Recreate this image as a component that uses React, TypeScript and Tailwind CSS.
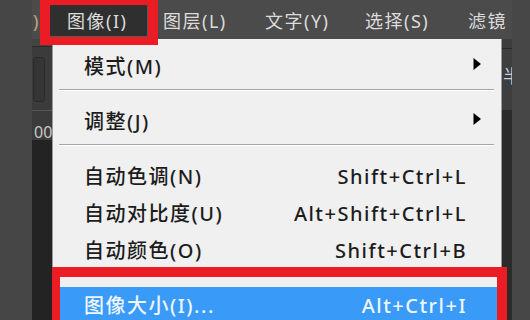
import React from "react";

type Item =
  | { kind: "sep" }
  | { kind: "item"; label: string; shortcut?: string; arrow?: boolean; active?: boolean };

const menuItems: Item[] = [
  { kind: "item", label: "模式(M)", arrow: true },
  { kind: "sep" },
  { kind: "item", label: "调整(J)", arrow: true },
  { kind: "sep" },
  { kind: "item", label: "自动色调(N)", shortcut: "Shift+Ctrl+L" },
  { kind: "item", label: "自动对比度(U)", shortcut: "Alt+Shift+Ctrl+L" },
  { kind: "item", label: "自动颜色(O)", shortcut: "Shift+Ctrl+B" },
  { kind: "sep" },
  { kind: "item", label: "图像大小(I)...", shortcut: "Alt+Ctrl+I", active: true },
];

const topMenus = [
  { label: "图层(L)", w: "w-[102px]" },
  { label: "文字(Y)", w: "w-[100px]" },
  { label: "选择(S)", w: "w-[103px]" },
  { label: "滤镜", w: "w-[103px]" },
];

function Arrow() {
  return (
    <svg width="8" height="12" viewBox="0 0 8 12" className="-translate-y-[3px]">
      <path d="M0.5 0 L8 6 L0.5 12 Z" fill="#000" />
    </svg>
  );
}

function MenuRow({ item }: { item: Extract<Item, { kind: "item" }> }) {
  return (
    <div
      className={
        item.active
          ? "flex h-[37px] items-center mx-[2px] pl-[29px] pr-[18px] bg-[#3a9af7] text-[#eef6ff]"
          : "flex h-[37px] items-center pl-[31px] pr-[20px] text-[#1c1c1c]"
      }
    >
      <span className="tracking-[1.5px]">{item.label}</span>
      {item.shortcut && (
        <span className="ml-auto mr-[14px] tracking-[1.5px]">{item.shortcut}</span>
      )}
      {item.arrow && (
        <span className="ml-auto">
          <Arrow />
        </span>
      )}
    </div>
  );
}

export default function App() {
  return (
    <div className="w-[530px] h-[320px] overflow-hidden flex bg-[#464646] font-['Noto_Sans','Noto_Sans_CJK_SC',sans-serif]">
      <div className="w-[32px] shrink-0 bg-[#464646]" />

      <div className="w-[480px] shrink-0 flex flex-col relative">
        {/* menu bar */}
        <div className="h-[39px] shrink-0 flex pt-[5px] pb-[2px] bg-[#4b4b4b] text-[18px] leading-none text-[#dcdcdc] overflow-hidden whitespace-nowrap">
          <div className="w-[18px] shrink-0 flex items-center pl-[1px] text-[#c9a27a]">)</div>
          <div className="w-[98px] shrink-0 flex items-center pl-[17px] bg-[#2f2f2f] rounded-[2px] border-r border-b border-[#5a5a5a]">
            <span className="tracking-[1.5px]">图像(I)</span>
          </div>
          {topMenus.map((m) => (
            <div key={m.label} className={`${m.w} shrink-0 flex items-center pl-[15px]`}>
              <span className="tracking-[1.5px]">{m.label}</span>
            </div>
          ))}
        </div>

        <div className="flex flex-1 min-h-0">
          {/* left panel */}
          <div className="w-[20px] shrink-0 flex flex-col bg-[#232323] overflow-hidden">
            <div className="h-[7px] bg-[#434343]" />
            <div className="h-px bg-[#2c2c2c]" />
            <div className="h-[63px] bg-[#3b3b3b] pt-[10px] pl-[1px]">
              <div className="w-[12px] h-[45px] rounded-[3px] bg-[#353535] border border-[#2a2a2a]" />
            </div>
            <div className="h-px bg-[#555555]" />
            <div className="h-[29px] bg-[#3b3b3b] flex items-end pl-[2px] text-[16px] leading-none text-[#c8c8c8] whitespace-nowrap">
              00
            </div>
          </div>

          {/* dropdown menu */}
          <div className="w-[450px] shrink-0 bg-[#f0f0f0] border-x border-[#9a9a9a] pt-[9px] text-[20px] font-medium leading-none whitespace-nowrap">
            {menuItems.map((item, i) =>
              item.kind === "sep" ? (
                <div
                  key={i}
                  className="ml-[6px] mr-[7px] mt-[4px] mb-[13px] h-px bg-[#a6a6a6] shadow-[0_1px_0_#ffffff]"
                />
              ) : (
                <MenuRow key={i} item={item} />
              )
            )}
          </div>

          {/* right panel */}
          <div className="w-[10px] shrink-0 flex flex-col bg-[#2b2b2b] overflow-hidden">
            <div className="h-[9px] bg-[#3d3d3d]" />
            <div className="h-px bg-[#2a2a2a]" />
            <div className="h-[61px] bg-[#3e3e3e] pt-[18px] pl-[1px] text-[18px] leading-none text-[#cfcfcf] whitespace-nowrap">
              半
            </div>
            <div className="h-px bg-[#2a2a2a]" />
          </div>
        </div>

        {/* red annotation boxes */}
        <div className="absolute left-[8px] top-[-5px] w-[118px] h-[50px] border-[10px] border-b-[8px] border-[#ec1c24]" />
        <div className="absolute left-[20px] top-[267px] w-[455px] h-[70px] border-[10px] border-l-[8px] border-[#ec1c24]" />
      </div>

      <div className="w-[18px] shrink-0 bg-[#474747]" />
    </div>
  );
}
